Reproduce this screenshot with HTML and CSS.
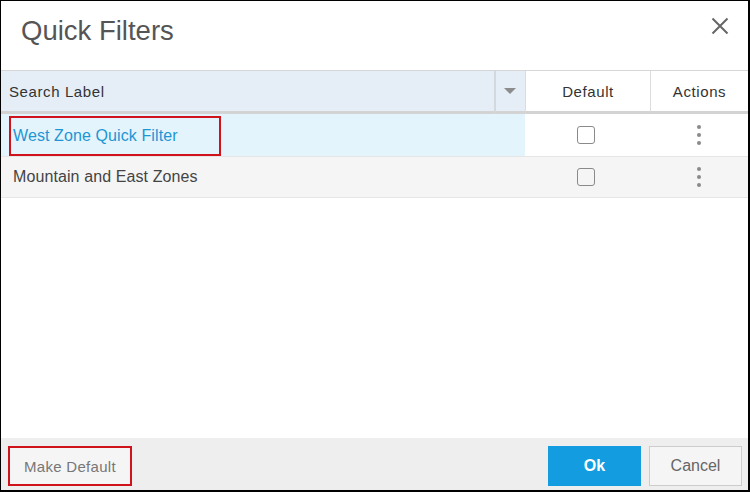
FILE: index.html
```html
<!DOCTYPE html>
<html>
<head>
<meta charset="utf-8">
<link rel="stylesheet" href="styles.css">
</head>
<body>
<div class="dialog">
  <div class="head">
    <h1 class="title">Quick Filters</h1>
    <button class="close" aria-label="Close">
      <svg width="18" height="18" viewBox="0 0 18 18"><path d="M1.5 1.5 L16.5 16.5 M16.5 1.5 L1.5 16.5" stroke="#666" stroke-width="2" fill="none"/></svg>
    </button>
  </div>
  <div class="grid">
    <div class="th th-label">Search Label</div>
    <div class="th th-drop"><span class="tri"></span></div>
    <div class="th th-center">Default</div>
    <div class="th th-center">Actions</div>

    <div class="td td-label sel"><div class="hl">West Zone Quick Filter</div></div>
    <div class="td td-center"><span class="cb"></span></div>
    <div class="td td-center"><span class="kebab"><i></i><i></i><i></i></span></div>

    <div class="td td-label alt">Mountain and East Zones</div>
    <div class="td td-center alt"><span class="cb"></span></div>
    <div class="td td-center alt"><span class="kebab"><i></i><i></i><i></i></span></div>
  </div>
  <div class="foot">
    <button class="btn btn-make">Make Default</button>
    <div class="spacer"></div>
    <button class="btn btn-ok">Ok</button>
    <button class="btn btn-cancel">Cancel</button>
  </div>
</div>
</body>
</html>
```
FILE: styles.css
```css
html, body {
  margin: 0;
  padding: 0;
  background: #fff;
}
body {
  font-family: "Liberation Sans", Arial, sans-serif;
}
.dialog {
  width: 750px;
  height: 492px;
  box-sizing: border-box;
  border-top: 1px solid #000;
  border-left: 1px solid #000;
  border-right: 2px solid #000;
  border-bottom: 2px solid #000;
  display: flex;
  flex-direction: column;
  background: #fff;
}
.head {
  height: 69px;
  box-sizing: border-box;
  padding: 14px 19px 0 20px;
  display: flex;
  align-items: flex-start;
  justify-content: space-between;
}
.title {
  margin: 0;
  font-weight: normal;
  font-size: 27.5px;
  line-height: 32px;
  letter-spacing: 0;
  color: #555;
}
.close {
  border: 0;
  background: none;
  padding: 0;
  margin-top: 2px;
  width: 18px;
  height: 18px;
  display: block;
}
.close svg { display: block; }
.grid {
  display: grid;
  grid-template-columns: 493px 31px 125px 1fr;
  border-top: 1px solid #d6d6d6;
}
.th {
  box-sizing: border-box;
  display: flex;
  align-items: center;
  font-size: 15px;
  letter-spacing: 0.6px;
  color: #333;
  border-bottom: 3px solid #d3d3d3;
  height: 43px;
}
.th-label {
  background: #e5eef6;
  padding-left: 8px;
}
.th-drop {
  background: #e5eef6;
  border-left: 2px solid #d4d9de;
  justify-content: center;
}
.th-center {
  justify-content: center;
  border-left: 1px solid #dcdcdc;
}
.tri {
  width: 0;
  height: 0;
  border-left: 6px solid transparent;
  border-right: 6px solid transparent;
  border-top: 6px solid #8c8c8c;
  margin-left: -2px;
}
.td {
  box-sizing: border-box;
  display: flex;
  align-items: center;
  border-bottom: 1px solid #e6e6e6;
  font-size: 16px;
  letter-spacing: 0.1px;
}
.td-label {
  grid-column: span 2;
  padding-left: 12px;
  color: #444;
}
.td-center {
  justify-content: center;
}
.sel {
  background: #e4f4fc;
  height: 43px;
  padding-left: 8px;
  color: #1e96d4;
}
.alt {
  background: #f5f5f5;
  height: 41px;
}
.hl {
  width: 212px;
  height: 40px;
  box-sizing: border-box;
  border: 2px solid #d0121b;
  display: flex;
  align-items: center;
  padding-left: 2px;
  margin-top: 2px;
}
.cb {
  width: 18px;
  height: 18px;
  box-sizing: border-box;
  border: 1.5px solid #8a8a8a;
  border-radius: 3px;
  background: #fff;
  margin-left: -3px;
}
.alt .cb { background: #f5f5f5; }
.kebab {
  display: flex;
  flex-direction: column;
  gap: 4px;
}
.kebab i {
  display: block;
  width: 4px;
  height: 4px;
  border-radius: 50%;
  background: #8a8a8a;
}
.foot {
  margin-top: auto;
  height: 52px;
  box-sizing: border-box;
  background: #eee;
  display: flex;
  align-items: flex-start;
  padding: 8px 6px 0 7px;
  gap: 8px;
}
.spacer { flex: 1; }
.btn {
  height: 40px;
  box-sizing: border-box;
  font-family: "Liberation Sans", Arial, sans-serif;
  font-size: 15px;
  padding: 0;
  margin: 0;
}
.btn-make {
  width: 124px;
  background: #f5f5f5;
  border: 1px solid #ccc;
  color: #777;
  outline: 2px solid #d0121b;
  outline-offset: -2px;
  letter-spacing: 0.3px;
}
.btn-ok {
  width: 93px;
  background: #139cdf;
  border: 0;
  color: #fff;
  font-weight: bold;
  font-size: 16px;
}
.btn-cancel {
  width: 93px;
  background: #f5f5f5;
  border: 1px solid #ccc;
  color: #666;
  font-size: 16px;
}
```
